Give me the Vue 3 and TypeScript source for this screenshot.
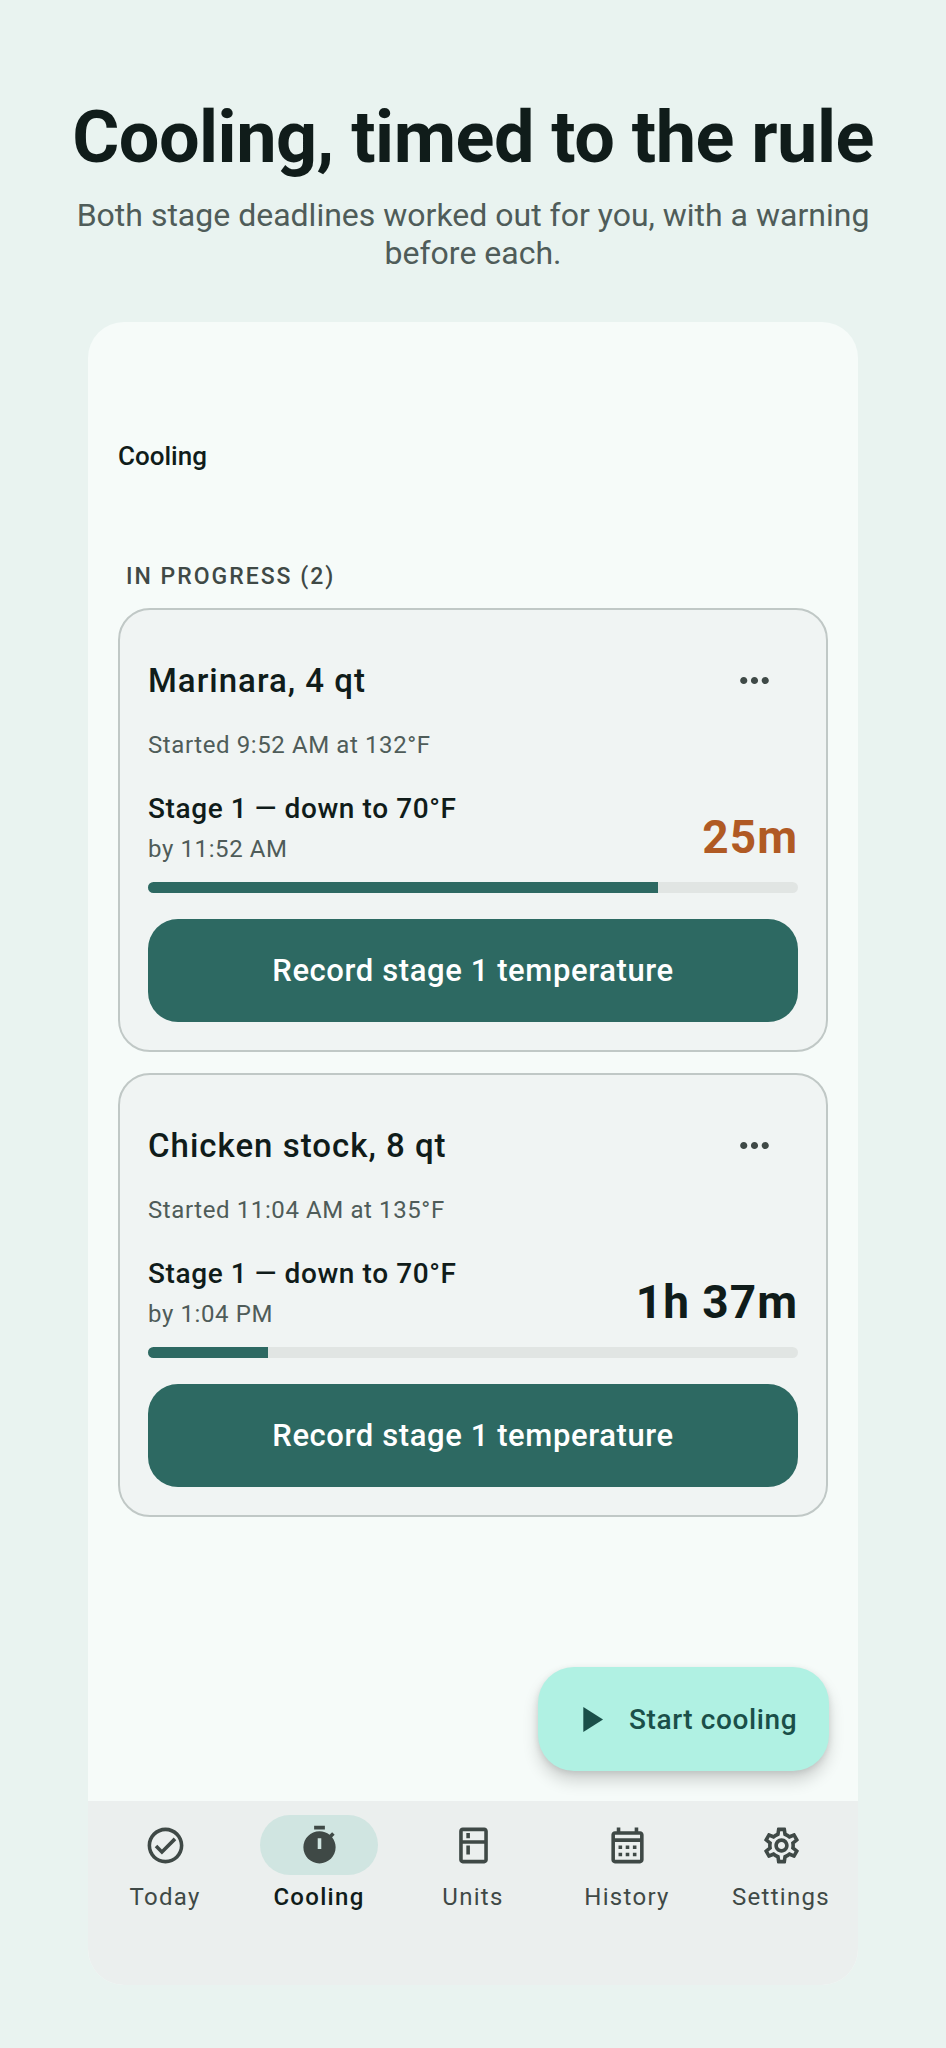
<script setup lang="ts">
interface Batch {
  name: string
  started: string
  deadline: string
  remaining: string
  progress: number
  urgent: boolean
}

interface NavItem {
  label: string
  icon: string
  active?: boolean
}

const batches: Batch[] = [
  { name: 'Marinara, 4 qt', started: 'Started 9:52 AM at 132°F', deadline: 'by 11:52 AM', remaining: '25m', progress: 78.4, urgent: true },
  { name: 'Chicken stock, 8 qt', started: 'Started 11:04 AM at 135°F', deadline: 'by 1:04 PM', remaining: '1h 37m', progress: 18.4, urgent: false },
]

const navItems: NavItem[] = [
  {
    label: 'Today',
    icon: 'M12 2C6.48 2 2 6.48 2 12s4.48 10 10 10 10-4.48 10-10S17.52 2 12 2zm0 18c-4.41 0-8-3.59-8-8s3.59-8 8-8 8 3.59 8 8-3.59 8-8 8zm4.59-12.42L10 14.17l-2.59-2.58L6 13l4 4 8-8z',
  },
  {
    label: 'Cooling',
    active: true,
    icon: 'M9 1h6v2H9zM19.03 7.39l1.42-1.42c-.43-.51-.9-.99-1.41-1.41l-1.42 1.42C16.07 4.74 14.12 4 12 4c-4.97 0-9 4.03-9 9s4.02 9 9 9 9-4.03 9-9c0-2.12-.74-4.07-1.97-5.61zM13 14h-2V8h2v6z',
  },
  {
    label: 'Units',
    icon: 'M18 2.01L6 2c-1.1 0-2 .89-2 2v16c0 1.1.9 2 2 2h12c1.1 0 2-.9 2-2V4c0-1.11-.9-1.99-2-1.99zM18 20H6v-9.02h12V20zm0-11H6V4h12v5zM8 5h2v3H8zm0 7h2v5H8z',
  },
  {
    label: 'History',
    icon: 'M19 4h-1V2h-2v2H8V2H6v2H5c-1.11 0-1.99.9-1.99 2L3 20c0 1.1.89 2 2 2h14c1.1 0 2-.9 2-2V6c0-1.1-.9-2-2-2zm0 16H5V10h14v10zm0-12H5V6h14v2zM9 14H7v-2h2v2zm4 0h-2v-2h2v2zm4 0h-2v-2h2v2zm-8 4H7v-2h2v2zm4 0h-2v-2h2v2zm4 0h-2v-2h2v2z',
  },
  {
    label: 'Settings',
    icon: 'M19.43 12.98c.04-.32.07-.64.07-.98 0-.34-.03-.66-.07-.98l2.11-1.65c.19-.15.24-.42.12-.64l-2-3.46c-.09-.16-.26-.25-.44-.25-.06 0-.12.01-.17.03l-2.49 1c-.52-.4-1.08-.73-1.69-.98l-.38-2.65C14.46 2.18 14.25 2 14 2h-4c-.25 0-.46.18-.49.42l-.38 2.65c-.61.25-1.17.59-1.69.98l-2.49-1c-.06-.02-.12-.03-.18-.03-.17 0-.34.09-.43.25l-2 3.46c-.13.22-.07.49.12.64l2.11 1.65c-.04.32-.07.65-.07.98 0 .33.03.66.07.98l-2.11 1.65c-.19.15-.24.42-.12.64l2 3.46c.09.16.26.25.44.25.06 0 .12-.01.17-.03l2.49-1c.52.4 1.08.73 1.69.98l.38 2.65c.03.24.24.42.49.42h4c.25 0 .46-.18.49-.42l.38-2.65c.61-.25 1.17-.59 1.69-.98l2.49 1c.06.02.12.03.18.03.17 0 .34-.09.43-.25l2-3.46c.12-.22.07-.49-.12-.64l-2.11-1.65zm-1.98-1.71c.04.31.05.52.05.73 0 .21-.02.43-.05.73l-.14 1.13.89.7 1.08.84-.7 1.21-1.27-.51-1.04-.42-.9.68c-.43.32-.84.56-1.25.73l-1.06.43-.16 1.13-.2 1.35h-1.4l-.19-1.35-.16-1.13-1.06-.43c-.43-.18-.83-.41-1.23-.71l-.91-.7-1.06.43-1.27.51-.7-1.21 1.08-.84.89-.7-.14-1.13c-.03-.31-.05-.54-.05-.74s.02-.43.05-.73l.14-1.13-.89-.7-1.08-.84.7-1.21 1.27.51 1.04.42.9-.68c.43-.32.84-.56 1.25-.73l1.06-.43.16-1.13.2-1.35h1.39l.19 1.35.16 1.13 1.06.43c.43.18.83.41 1.23.71l.91.7 1.06-.43 1.27-.51.7 1.21-1.07.85-.89.7.14 1.13zM12 8c-2.21 0-4 1.79-4 4s1.79 4 4 4 4-1.79 4-4-1.79-4-4-4zm0 6c-1.1 0-2-.9-2-2s.9-2 2-2 2 .9 2 2-.9 2-2 2z',
  },
]
</script>

<template>
  <div class="page">
    <header class="hero">
      <h1>Cooling, timed to the rule</h1>
      <p>Both stage deadlines worked out for you, with a warning before each.</p>
    </header>

    <section class="phone">
      <div class="topbar">Cooling</div>

      <main class="content">
        <h2 class="section-label">IN PROGRESS (2)</h2>

        <article v-for="batch in batches" :key="batch.name" class="card">
          <div class="card-head">
            <h3>{{ batch.name }}</h3>
            <svg class="icon more" viewBox="0 0 24 24">
              <path d="M6 10c-1.1 0-2 .9-2 2s.9 2 2 2 2-.9 2-2-.9-2-2-2zm12 0c-1.1 0-2 .9-2 2s.9 2 2 2 2-.9 2-2-.9-2-2-2zm-6 0c-1.1 0-2 .9-2 2s.9 2 2 2 2-.9 2-2-.9-2-2-2z" />
            </svg>
          </div>
          <p class="started">{{ batch.started }}</p>

          <div class="stage">
            <div>
              <p class="stage-name">Stage 1 — down to 70°F</p>
              <p class="stage-by">{{ batch.deadline }}</p>
            </div>
            <span class="remaining" :class="{ urgent: batch.urgent }">{{ batch.remaining }}</span>
          </div>

          <div class="track">
            <div class="fill" :style="{ width: batch.progress + '%' }"></div>
          </div>

          <button class="record" type="button">Record stage 1 temperature</button>
        </article>
      </main>

      <button class="fab" type="button">
        <svg class="icon" viewBox="0 0 24 24"><path d="M8 5v14l11-7z" /></svg>
        <span>Start cooling</span>
      </button>

      <nav class="nav">
        <div v-for="item in navItems" :key="item.label" class="nav-item" :class="{ active: item.active }">
          <span class="nav-icon">
            <svg class="icon" viewBox="0 0 24 24"><path fill-rule="evenodd" :d="item.icon" /></svg>
          </span>
          <span class="nav-label">{{ item.label }}</span>
        </div>
      </nav>
    </section>
  </div>
</template>

<style>
body {
  background: #e9f3f0;
}
</style>

<style scoped>
.page {
  height: 2048px;
  box-sizing: border-box;
  padding-top: 96px;
  background: #e9f3f0;
  font-family: Roboto, "Noto Sans", sans-serif;
  color: #101c1a;
  display: flex;
  flex-direction: column;
  align-items: center;
}

h1, h2, h3, p {
  margin: 0;
}

.hero {
  text-align: center;
  padding: 0 76px;
}

.hero h1 {
  font-size: 72px;
  line-height: 84px;
  font-weight: 700;
  letter-spacing: -0.5px;
  white-space: nowrap;
}

.hero p {
  margin-top: 16px;
  font-size: 32px;
  line-height: 38px;
  color: #4f5c59;
}

.phone {
  position: relative;
  width: 770px;
  height: 1663px;
  margin-top: 50px;
  border-radius: 36px;
  overflow: hidden;
  background: #f6fbf9;
  display: flex;
  flex-direction: column;
}

.topbar {
  padding: 118px 30px 0;
  font-size: 26px;
  line-height: 32px;
  font-weight: 500;
  color: #101c1a;
}

.content {
  flex: 1;
  padding: 0 30px;
}

.section-label {
  margin: 90px 0 0 8px;
  font-size: 23px;
  line-height: 30px;
  font-weight: 500;
  letter-spacing: 2px;
  color: #3f4946;
}

.card {
  box-sizing: border-box;
  height: 444px;
  margin-top: 16px;
  padding: 28px;
  border: 2px solid #c0c8c6;
  border-radius: 32px;
  background: #f0f4f3;
  display: flex;
  flex-direction: column;
}

.section-label + .card {
  margin-top: 16px;
}

.card + .card {
  margin-top: 21px;
}

.card-head {
  height: 86px;
  display: flex;
  align-items: center;
  justify-content: space-between;
}

.card-head h3 {
  font-size: 33px;
  line-height: 42px;
  font-weight: 500;
  letter-spacing: 1px;
  color: #101c1a;
}

.icon {
  width: 43px;
  height: 43px;
  flex: none;
  fill: currentColor;
  display: block;
}

.more {
  margin-right: 22px;
  color: #3f4946;
}

.started {
  margin-top: 3px;
  font-size: 24px;
  line-height: 36px;
  letter-spacing: 0.6px;
  color: #4f5c59;
}

.stage {
  margin-top: 26px;
  display: flex;
  justify-content: space-between;
  align-items: flex-end;
}

.stage-name {
  font-size: 28px;
  line-height: 40px;
  font-weight: 500;
  letter-spacing: 0.6px;
  color: #101c1a;
}

.stage-by {
  margin-top: 2px;
  font-size: 24px;
  line-height: 36px;
  letter-spacing: 0.6px;
  color: #4f5c59;
}

.remaining {
  font-size: 46px;
  line-height: 60px;
  font-weight: 700;
  letter-spacing: 1px;
  color: #101c1a;
}

.remaining.urgent {
  color: #b05a24;
}

.track {
  height: 11px;
  margin-top: 15px;
  border-radius: 6px;
  overflow: hidden;
  background: #e1e5e3;
}

.fill {
  height: 100%;
  background: #2d6962;
}

.record {
  height: 104px;
  margin-top: 26px;
  border: none;
  border-radius: 30px;
  background: #2d6962;
  color: #fff;
  font-family: inherit;
  font-size: 31px;
  font-weight: 500;
  letter-spacing: 0.6px;
}

.fab {
  position: absolute;
  left: 450px;
  top: 1345px;
  width: 291px;
  height: 104px;
  box-sizing: border-box;
  padding: 0 0 0 31px;
  border: none;
  border-radius: 36px;
  background: #b0f1e3;
  color: #1a4f49;
  font-family: inherit;
  font-size: 28px;
  font-weight: 500;
  letter-spacing: 0.6px;
  display: flex;
  align-items: center;
  gap: 17px;
  box-shadow: 0 10px 16px rgba(0, 0, 0, 0.16), 0 2px 6px rgba(0, 0, 0, 0.1);
}

.nav {
  height: 184px;
  background: #ebefee;
  display: flex;
}

.nav-item {
  flex: 1;
  padding-top: 14px;
  display: flex;
  flex-direction: column;
  align-items: center;
  color: #3f4946;
}

.nav-icon {
  width: 118px;
  height: 60px;
  border-radius: 30px;
  display: flex;
  align-items: center;
  justify-content: center;
}

.nav-item.active .nav-icon {
  background: #d0e5e1;
}

.nav-label {
  margin-top: 6px;
  font-size: 24px;
  line-height: 32px;
  font-weight: 400;
  letter-spacing: 1.3px;
}

.nav-item.active .nav-label {
  color: #101c1a;
  font-weight: 500;
}
</style>
